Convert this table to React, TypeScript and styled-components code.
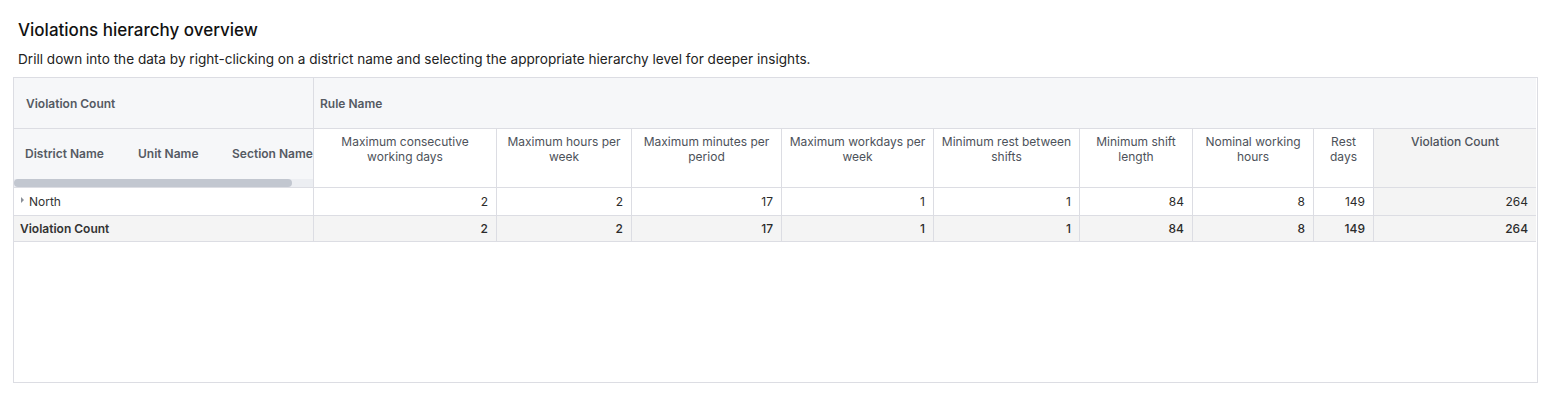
import styled, { createGlobalStyle } from "styled-components";

const GlobalStyle = createGlobalStyle`
  html, body {
    margin: 0;
    padding: 0;
    background: #ffffff;
    font-family: Inter, "Noto Sans", "Liberation Sans", sans-serif;
    color: #1f1f1f;
  }
`;

// column widths for the rule columns (px)
const ruleCols = [
  { name: "Maximum consecutive working days", width: 183, value: 2 },
  { name: "Maximum hours per week", width: 135, value: 2 },
  { name: "Maximum minutes per period", width: 150, value: 17 },
  { name: "Maximum workdays per week", width: 152, value: 1 },
  { name: "Minimum rest between shifts", width: 146, value: 1 },
  { name: "Minimum shift length", width: 113, value: 84 },
  { name: "Nominal working hours", width: 121, value: 8 },
  { name: "Rest days", width: 60, value: 149 },
];
const totalWidth = 163;
const totalValue = 264;
const leftWidth = 301;

const Page = styled.div`
  padding: 18px 13px 0 13px;
`;

const Title = styled.h2`
  margin: 0 0 0 5px;
  font-size: 17px;
  font-weight: 500;
  line-height: 24px;
  color: #111;
`;

const Subtitle = styled.p`
  margin: 8px 0 0 5px;
  font-size: 13.6px;
  line-height: 18px;
  color: #222;
`;

const Table = styled.div`
  margin-top: 9px;
  width: 1525px;
  height: 306px;
  box-sizing: border-box;
  border: 1px solid #dcdde3;
  display: grid;
  grid-template-columns: ${leftWidth - 1}px ${ruleCols.map((c) => c.width + "px").join(" ")} ${totalWidth - 1}px;
  grid-template-rows: 51px 59px 28px 26px 1fr;
  font-size: 12px;
`;

const Cell = styled.div<{ $bg?: string; $last?: boolean; $bottom?: boolean }>`
  box-sizing: border-box;
  background: ${(p) => p.$bg || "#ffffff"};
  border-right: ${(p) => (p.$last ? "none" : "1px solid #dcdde3")};
  border-bottom: ${(p) => (p.$bottom ? "1px solid #dcdde3" : "none")};
  min-width: 0;
`;

const TopHead = styled(Cell)<{ $span?: number; $pad: number }>`
  grid-column: ${(p) => (p.$span ? `span ${p.$span}` : "auto")};
  background: #f6f7f9;
  display: flex;
  align-items: center;
  padding-left: ${(p) => p.$pad}px;
  font-weight: 600;
  color: #555a63;
  border-bottom: 1px solid #dcdde3;
`;

const LeftHead = styled(Cell)`
  background: #f6f7f9;
  display: flex;
  flex-direction: column;
  border-bottom: 1px solid #dcdde3;
`;

const LevelRow = styled.div`
  flex: 1;
  display: flex;
  align-items: center;
  padding-bottom: 2px;
  white-space: nowrap;
`;

const LevelLabel = styled.span<{ $w: number }>`
  width: ${(p) => p.$w}px;
  flex: none;
  padding-left: 11px;
  box-sizing: border-box;
  font-weight: 600;
  color: #555a63;
`;

const ScrollTrack = styled.div`
  height: 8px;
  background: #eceef2;
  display: flex;
`;

const ScrollThumb = styled.div`
  width: 278px;
  height: 8px;
  border-radius: 4px;
  background: #c2c7d0;
`;

const ColHead = styled(Cell)`
  text-align: center;
  padding: 5px 6px 0;
  line-height: 15px;
  color: #4d525a;
  border-bottom: 1px solid #dcdde3;
`;

const TotalHead = styled(ColHead)`
  background: #f4f4f4;
  font-weight: 500;
`;

const RowLabel = styled(Cell)<{ $bold?: boolean }>`
  display: flex;
  align-items: center;
  gap: 5px;
  padding-left: 6px;
  font-weight: ${(p) => (p.$bold ? 600 : 400)};
  color: #333;
`;

const Caret = styled.span`
  width: 0;
  height: 0;
  border-top: 3px solid transparent;
  border-bottom: 3px solid transparent;
  border-left: 3px solid #8a8f98;
  margin-left: 1px;
  margin-top: -3px;
`;

const Num = styled(Cell)<{ $bold?: boolean }>`
  display: flex;
  align-items: center;
  justify-content: flex-end;
  padding-right: 8px;
  font-weight: ${(p) => (p.$bold ? 500 : 400)};
  color: #2b2b2b;
`;

const Filler = styled.div`
  grid-column: 1 / -1;
`;

export default function App() {
  return (
    <>
      <GlobalStyle />
      <Page>
        <Title>Violations hierarchy overview</Title>
        <Subtitle>
          Drill down into the data by right-clicking on a district name and selecting the appropriate
          hierarchy level for deeper insights.
        </Subtitle>
        <Table>
          <TopHead $pad={12}>Violation Count</TopHead>
          <TopHead $pad={6} $span={ruleCols.length + 1} $last>
            Rule Name
          </TopHead>

          <LeftHead>
            <LevelRow>
              <LevelLabel $w={113}>District Name</LevelLabel>
              <LevelLabel $w={94}>Unit Name</LevelLabel>
              <LevelLabel $w={94}>Section Name</LevelLabel>
            </LevelRow>
            <ScrollTrack>
              <ScrollThumb />
            </ScrollTrack>
          </LeftHead>
          {ruleCols.map((c) => (
            <ColHead key={c.name}>{c.name}</ColHead>
          ))}
          <TotalHead $last>Violation Count</TotalHead>

          <RowLabel $bottom>
            <Caret />
            North
          </RowLabel>
          {ruleCols.map((c) => (
            <Num key={c.name} $bottom>
              {c.value}
            </Num>
          ))}
          <Num $bg="#f4f4f4" $last $bottom>
            {totalValue}
          </Num>

          <RowLabel $bold $bg="#f4f4f4" $bottom>
            Violation Count
          </RowLabel>
          {ruleCols.map((c) => (
            <Num key={c.name} $bold $bg="#f4f4f4" $bottom>
              {c.value}
            </Num>
          ))}
          <Num $bold $bg="#f4f4f4" $last $bottom>
            {totalValue}
          </Num>

          <Filler />
        </Table>
      </Page>
    </>
  );
}
